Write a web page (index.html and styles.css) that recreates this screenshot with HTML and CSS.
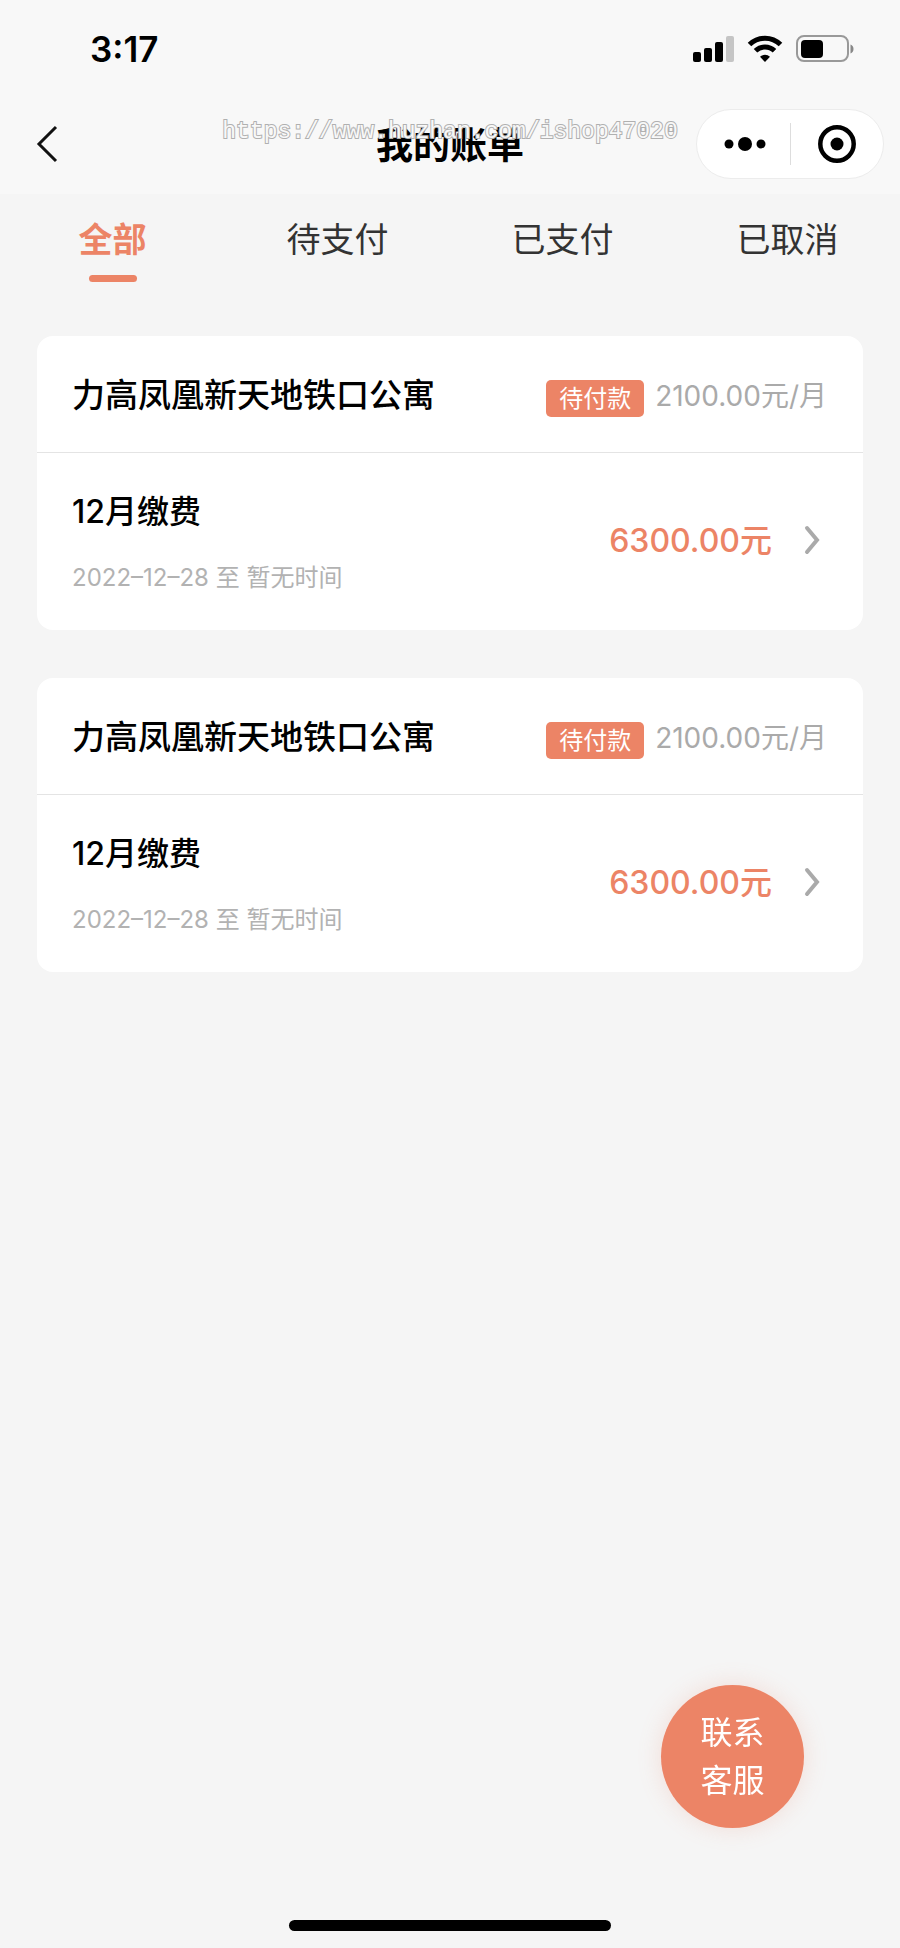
FILE: index.html
```
<!DOCTYPE html>
<html lang="zh-CN">
<head>
    <meta charset="UTF-8">
    <meta name="viewport" content="width=device-width, initial-scale=1.0">
    <title>我的账单</title>
    <link rel="stylesheet" href="styles.css">
</head>
<body>
    <header class="top">
        <div class="status">
            <span class="time">3:17</span>
            <svg class="signal" width="41" height="28" viewBox="0 0 41 28">
                <rect x="0" y="17" width="8" height="10" rx="2"/>
                <rect x="11" y="13" width="8" height="14" rx="2"/>
                <rect x="22" y="7" width="8" height="20" rx="2"/>
                <rect x="33" y="1" width="8" height="26" rx="2" fill="#c5c5c5"/>
            </svg>
            <svg class="wifi" width="36" height="28" viewBox="0 0 36 28">
                <path d="M2.5 9.6a22 22 0 0 1 31 0M8.5 15.8a13.6 13.6 0 0 1 19 0" fill="none" stroke="#000" stroke-width="5"/>
                <path d="M18 27l-5-5.2a7.4 7.4 0 0 1 10 0z"/>
            </svg>
            <svg class="battery" width="58" height="28" viewBox="0 0 58 28">
                <rect x="1" y="1" width="51" height="25" rx="7" fill="none" stroke="#999" stroke-width="2"/>
                <rect x="5" y="5" width="22" height="18" rx="4"/>
                <path d="M54.500 9.500c4 1.500 4 7.500 0 9z" fill="#888"/>
            </svg>
        </div>
        <div class="nav">
            <button class="back" aria-label="返回">
                <svg width="24" height="38" viewBox="0 0 24 38">
                    <path d="M20 2L3 19l17 17" fill="none" stroke="#111" stroke-width="3"/>
                </svg>
            </button>
            <h1>我的账单</h1>
            <div class="capsule">
                <button aria-label="更多">
                    <svg width="46" height="38" viewBox="0 0 46 38">
                        <circle cx="9" cy="19" r="4.500"/>
                        <circle cx="25" cy="19" r="7"/>
                        <circle cx="41" cy="19" r="4.500"/>
                    </svg>
                </button>
                <button aria-label="关闭">
                    <svg width="38" height="38" viewBox="0 0 38 38">
                        <circle cx="19" cy="19" r="16.700" fill="none" stroke="#000" stroke-width="4.500"/>
                        <circle cx="19" cy="19" r="6.500"/>
                    </svg>
                </button>
            </div>
            <span class="watermark">https://www.huzhan.com/ishop47020</span>
        </div>
    </header>

    <nav class="tabs">
        <button class="tab active">全部</button>
        <button class="tab">待支付</button>
        <button class="tab">已支付</button>
        <button class="tab">已取消</button>
    </nav>

    <main class="bills">
        <section class="card">
            <div class="card-head">
                <h2>力高凤凰新天地铁口公寓</h2>
                <span class="tag">待付款</span>
                <span class="rent">2100.00元/月</span>
            </div>
            <a class="card-body" href="#">
                <div class="info">
                    <h3>12月缴费</h3>
                    <p>2022–12–28 至 暂无时间</p>
                </div>
                <span class="amount">6300.00元</span>
                <svg width="16" height="30" viewBox="0 0 16 30">
                    <path d="M3 3l10 12L3 27" fill="none" stroke="#aaa" stroke-width="4" stroke-linecap="round"/>
                </svg>
            </a>
        </section>
        <section class="card">
            <div class="card-head">
                <h2>力高凤凰新天地铁口公寓</h2>
                <span class="tag">待付款</span>
                <span class="rent">2100.00元/月</span>
            </div>
            <a class="card-body" href="#">
                <div class="info">
                    <h3>12月缴费</h3>
                    <p>2022–12–28 至 暂无时间</p>
                </div>
                <span class="amount">6300.00元</span>
                <svg width="16" height="30" viewBox="0 0 16 30">
                    <path d="M3 3l10 12L3 27" fill="none" stroke="#aaa" stroke-width="4" stroke-linecap="round"/>
                </svg>
            </a>
        </section>
    </main>

    <button class="service">联系<br>客服</button>
    <div class="home-bar"></div>
</body>
</html>
```
FILE: styles.css
```
* {
    box-sizing: border-box;
}
body {
    margin: 0;
    min-height: 100vh;
    display: flex;
    flex-direction: column;
    background-color: #f5f5f5;
    color: #000;
    font-family: Inter, "Noto Sans CJK SC", sans-serif;
}
h1, h2, h3, p {
    margin: 0;
}
h1, h2, h3 {
    font-weight: 500;
}
button {
    padding: 0;
    border: none;
    background: none;
    font-family: inherit;
    cursor: pointer;
}
svg {
    display: block;
}

/* status bar + title */
.top {
    background-color: #f8f8f8;
}
.status {
    height: 98px;
    padding: 0 46px 0 90px;
    display: flex;
    align-items: center;
}
.time {
    margin-right: auto;
    font-size: 35px;
    font-weight: 600;
}
.wifi {
    margin: 0 13px;
}
.nav {
    position: relative;
    height: 96px;
    padding: 0 16px 4px 36px;
    display: grid;
    grid-template-columns: 1fr auto 1fr;
    align-items: center;
}
.back {
    justify-self: start;
}
.nav h1 {
    padding-top: 3px;
    padding-right: 20px;
    font-size: 37px;
    font-weight: 600;
    line-height: 48px;
}
.capsule {
    justify-self: end;
    width: 188px;
    height: 70px;
    display: flex;
    align-items: center;
    background-color: #fff;
    border: 1px solid #ececec;
    border-radius: 35px;
}
.capsule button {
    flex: 1;
    height: 42px;
    display: flex;
    justify-content: center;
    align-items: center;
}
.capsule button + button {
    border-left: 1px solid #ddd;
}
.watermark {
    position: absolute;
    top: 18px;
    left: 0;
    right: 0;
    text-align: center;
    font-family: "Liberation Mono", monospace;
    font-size: 23px;
    line-height: 32px;
    color: #f8f8f8;
    -webkit-text-stroke: 2px #b0b0b0;
    paint-order: stroke fill;
    pointer-events: none;
}

/* tabs */
.tabs {
    display: flex;
}
.tab {
    flex: 1;
    height: 94px;
    display: flex;
    flex-direction: column;
    align-items: center;
    padding-top: 22px;
    font-size: 34px;
    line-height: 48px;
    color: #333;
}
.tab.active {
    color: #ec8466;
    font-weight: 600;
}
.tab.active::after {
    content: "";
    width: 48px;
    height: 7px;
    margin-top: 11px;
    border-radius: 4px;
    background-color: #ec8466;
}

/* bill cards */
.bills {
    flex: 1;
    padding: 48px 37px;
    display: flex;
    flex-direction: column;
    gap: 48px;
}
.card {
    background-color: #fff;
    border-radius: 16px;
}
.card-head {
    height: 117px;
    padding: 2px 36px 0 35px;
    display: flex;
    align-items: center;
    border-bottom: 1px solid #e4e4e4;
}
.card h2 {
    font-size: 33px;
    line-height: 48px;
}
.card h3 {
    font-size: 32px;
    line-height: 48px;
}
.tag {
    margin-top: 6px;
    margin-left: auto;
    margin-right: 11px;
    padding: 0 13px;
    border-radius: 5px;
    background-color: #ec8466;
    color: #fff;
    font-size: 24px;
    line-height: 37px;
}
.rent {
    padding-top: 2px;
    color: #aaa;
    font-size: 28px;
    line-height: 48px;
}
.card-body {
    height: 177px;
    padding: 0 43px 4px 35px;
    display: flex;
    align-items: center;
    color: inherit;
    text-decoration: none;
}
.info {
    margin-right: auto;
    padding-top: 4px;
}
.info p {
    margin-top: 24px;
    color: #b2b2b2;
    font-size: 24px;
    line-height: 36px;
}
.amount {
    padding-top: 2px;
    margin-right: 32px;
    color: #ec8466;
    font-size: 32px;
    font-weight: 500;
    line-height: 48px;
}

.service {
    position: fixed;
    right: 96px;
    bottom: 120px;
    width: 143px;
    height: 143px;
    border-radius: 50%;
    background-color: #ec8466;
    box-shadow: 0 0 24px rgba(236, 132, 102, 0.2);
    color: #fff;
    font-size: 32px;
    line-height: 48px;
}
.home-bar {
    align-self: center;
    width: 322px;
    max-width: 60%;
    height: 11px;
    margin-bottom: 17px;
    border-radius: 6px;
    background-color: #000;
}
```
